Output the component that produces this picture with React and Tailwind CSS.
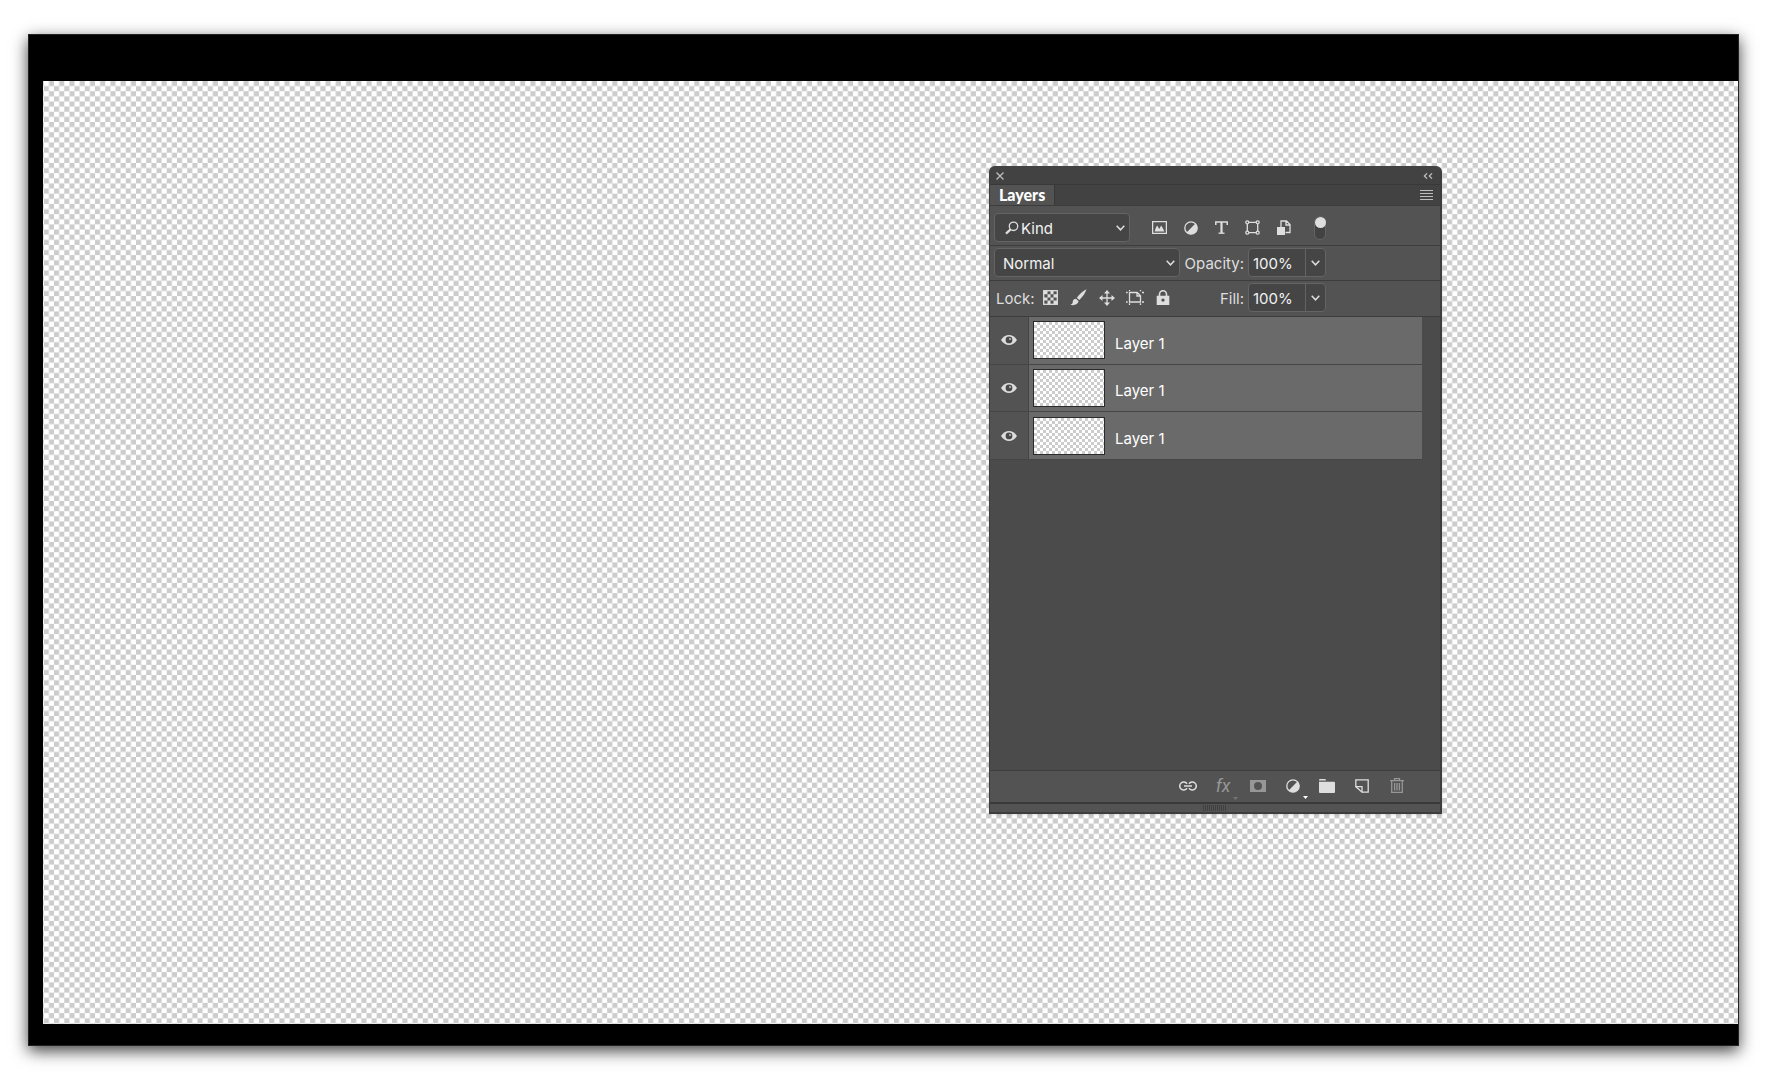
import React from 'react';

const stroke = { fill: 'none', stroke: 'currentColor', strokeWidth: 1.3 };

const CloseIcon = () => (
  <svg width="8" height="8" viewBox="0 0 8 8" {...stroke}>
    <path d="M.5.5l7 7M7.5.5l-7 7" />
  </svg>
);

const CollapseIcon = () => (
  <svg width="10" height="6" viewBox="0 0 10 6" {...stroke}>
    <path d="M4 .4L1.400 3 4 5.600M9 .4L6.400 3 9 5.600" />
  </svg>
);

const MenuIcon = () => (
  <svg width="13" height="10" viewBox="0 0 13 10" {...stroke} strokeWidth="1">
    <path d="M0 .5h13M0 3.500h13M0 6.500h13M0 9.500h13" />
  </svg>
);

const SearchIcon = () => (
  <svg width="14" height="14" viewBox="0 0 14 14" {...stroke}>
    <circle cx="8.500" cy="5.300" r="4.200" />
    <path d="M5.600 8.400L1 12.600" strokeWidth="2.200" />
  </svg>
);

const ChevronIcon = () => (
  <svg width="9" height="6" viewBox="0 0 9 6" {...stroke} strokeWidth="1.500">
    <path d="M.7.8l3.800 4L8.300.8" />
  </svg>
);

const ImageIcon = () => (
  <svg width="15" height="13" viewBox="0 0 15 13">
    <rect x=".6" y=".6" width="13.800" height="11.800" {...stroke} />
    <path d="M2.600 10.500L3.800 6.800 5.200 4.600l2 3.300 2-3.300 1.700 2.600 1.500 3.300z" fill="currentColor" />
  </svg>
);

const HalfCircleIcon = () => (
  <svg width="14" height="14" viewBox="0 0 14 14">
    <circle cx="7" cy="7" r="6.200" {...stroke} />
    <path d="M11.400 2.600A6.200 6.200 0 1 1 2.600 11.400z" fill="currentColor" />
  </svg>
);

const TypeIcon = () => (
  <svg width="13" height="13" viewBox="0 0 13 13" fill="none" stroke="currentColor">
    <path d="M.8 4V1h11.400v3" strokeWidth="1.500" />
    <path d="M6.500 1v11" strokeWidth="2.200" />
    <path d="M3.500 12.200h6" strokeWidth="1.300" />
  </svg>
);

const ShapeIcon = () => (
  <svg width="15" height="15" viewBox="0 0 15 15" {...stroke}>
    <path d="M4 2.300h7M4 12.700h7M2.300 4v7M12.700 4v7" />
    <circle cx="2.300" cy="2.300" r="1.500" />
    <circle cx="12.700" cy="2.300" r="1.500" />
    <circle cx="2.300" cy="12.700" r="1.500" />
    <circle cx="12.700" cy="12.700" r="1.500" />
  </svg>
);

const SmartObjectIcon = () => (
  <svg width="14" height="15" viewBox="0 0 14 15">
    <path d="M4 7V1h5.500L13 4.500V12.500H8.500M9 1v4h4" {...stroke} />
    <rect x="0" y="7" width="8" height="8" fill="currentColor" />
  </svg>
);

const TransparencyIcon = () => (
  <svg width="15" height="15" viewBox="0 0 15 15">
    <rect x=".7" y=".7" width="13.600" height="13.600" {...stroke} />
    <path d="M1 1h3.500v3.300H1zM7.500 1h3v3.300h-3zM4.500 4.300h3v3.200h-3zM10.500 4.300H14v3.200h-3.500zM1 7.500h3.500v3H1zM7.500 7.500h3v3h-3zM4.500 10.500h3V14h-3zM10.500 10.500H14V14h-3.500z" fill="currentColor" />
  </svg>
);

const BrushIcon = () => (
  <svg width="17" height="17" viewBox="0 0 17 17" fill="currentColor">
    <path d="M16.500.3C13 2 9.300 5.200 6.800 8.800l2.500 2.300C12.500 8 15.400 4 16.500.3z" />
    <path d="M5.900 9.700C3.900 9.800 2.800 11 2.800 12.800c0 1.500-.9 2.500-2.500 3 3.500 1.200 7.900-.2 8.200-3.700z" />
  </svg>
);

const MoveIcon = () => (
  <svg width="16" height="16" viewBox="0 0 16 16">
    <path d="M8 2v12M2 8h12" {...stroke} />
    <path d="M8 0l3 3.500H5zM8 16l3-3.500H5zM0 8l3.500-3v6zM16 8l-3.500-3v6z" fill="currentColor" />
  </svg>
);

const ArtboardIcon = () => (
  <svg width="18" height="15" viewBox="0 0 18 15" {...stroke}>
    <path d="M3.500 2.500h7.700l3.300 3.300v6.200h-11zM11 2.500v3.500h3.500" />
    <path d="M3.500 0v1.200M0 2.500h1.700M14.500 0v1.200M16 2.500h2M3.500 13.300V15M0 12h1.700M14.500 13.300V15M16 12h2" />
  </svg>
);

const LockIcon = () => (
  <svg width="14" height="15" viewBox="0 0 14 15">
    <path d="M3.500 6V4.200a3.500 3.500 0 0 1 7 0V6" {...stroke} strokeWidth="1.600" />
    <path d="M.7 5.700h12.600V15H.7zM7 8.400a1.700 1.700 0 1 0 0 3.400 1.700 1.700 0 0 0 0-3.400z" fill="currentColor" fillRule="evenodd" />
  </svg>
);

const EyeIcon = () => (
  <svg width="16" height="10" viewBox="0 0 16 10">
    <path d="M0 5C2.200 1.800 5 0 8 0s5.800 1.800 8 5c-2.200 3.200-5 5-8 5S2.200 8.200 0 5z" fill="#dedede" />
    <circle cx="8" cy="4.900" r="3.400" fill="#4a4a4a" />
    <circle cx="9" cy="3.900" r="1" fill="#c4c4c4" />
  </svg>
);

const LinkIcon = () => (
  <svg width="18" height="10" viewBox="0 0 18 10" {...stroke} strokeWidth="1.500">
    <path d="M8 2.700A4 4 0 1 0 8 7.300M10 2.700a4 4 0 1 1 0 4.600M5 5h8" />
  </svg>
);

const MaskIcon = () => (
  <svg width="16" height="12" viewBox="0 0 16 12">
    <path d="M0 0h16v12H0zM8 2a4 4 0 1 0 0 8 4 4 0 0 0 0-8z" fill="currentColor" fillRule="evenodd" />
  </svg>
);

const FolderIcon = () => (
  <svg width="16" height="14" viewBox="0 0 16 14" fill="currentColor">
    <path d="M.7 0h5.500l1.200 1.600H0V.8zM0 2.700h15a1 1 0 0 1 1 1V13a1 1 0 0 1-1 1H1a1 1 0 0 1-1-1z" />
  </svg>
);

const NewLayerIcon = () => (
  <svg width="14" height="14" viewBox="0 0 14 14" {...stroke}>
    <path d="M.8.8h12.400v12.400H7L.8 7.600z" />
    <path d="M.8 7.600H7v5.600" />
  </svg>
);

const TrashIcon = () => (
  <svg width="14" height="15" viewBox="0 0 14 15" {...stroke}>
    <path d="M0 2.600h14M4.500 2.300V.7h5v1.600M1.700 3v11.400h10.600V3M4.600 5v7.500M7 5v7.500M9.400 5v7.500" />
  </svg>
);

// transparency grid behind the document
const Checkerboard = () => (
  <svg className="absolute inset-0 size-full" aria-hidden="true">
    <defs>
      <pattern id="checker" x="0.800" y="0" width="10.243" height="10.243" patternUnits="userSpaceOnUse">
        <rect width="10.243" height="10.243" fill="#ffffff" />
        <path d="M5.122 0h5.121v5.122H5.122zM0 5.122h5.122v5.121H0z" fill="#cccccc" />
      </pattern>
    </defs>
    <rect width="100%" height="100%" fill="url(#checker)" />
  </svg>
);

const filters = [
  { label: 'Filter for pixel layers', icon: ImageIcon },
  { label: 'Filter for adjustment layers', icon: HalfCircleIcon },
  { label: 'Filter for type layers', icon: TypeIcon },
  { label: 'Filter for shape layers', icon: ShapeIcon },
  { label: 'Filter for smart objects', icon: SmartObjectIcon },
];

const locks = [
  { label: 'Lock transparent pixels', icon: TransparencyIcon },
  { label: 'Lock image pixels', icon: BrushIcon },
  { label: 'Lock position', icon: MoveIcon },
  { label: 'Prevent auto-nesting', icon: ArtboardIcon },
  { label: 'Lock all', icon: LockIcon },
];

const layers = [
  { id: 1, name: 'Layer 1' },
  { id: 2, name: 'Layer 1' },
  { id: 3, name: 'Layer 1' },
];

const actions = [
  { label: 'Link layers', icon: LinkIcon },
  { label: 'Add a layer style', text: 'fx', disabled: true, menu: true },
  { label: 'Add layer mask', icon: MaskIcon, disabled: true },
  { label: 'New adjustment layer', icon: HalfCircleIcon, menu: true },
  { label: 'New group', icon: FolderIcon },
  { label: 'New layer', icon: NewLayerIcon },
  { label: 'Delete layer', icon: TrashIcon, disabled: true },
];

const IconButton = ({ label, className = '', children, ...props }) => (
  <button type="button" aria-label={label} className={`flex items-center justify-center ${className}`} {...props}>
    {children}
  </button>
);

const SelectBox = ({ label, value, className, selectClass, icon }) => (
  <div className={`relative flex h-[29px] items-center rounded-sm border border-[#646464] bg-[#454545] ${className}`}>
    {icon}
    <select
      aria-label={label}
      defaultValue={value}
      className={`h-full w-full appearance-none bg-transparent pt-[3px] text-[#f2f2f2] outline-none ${selectClass}`}
    >
      <option>{value}</option>
    </select>
    <span className="pointer-events-none absolute right-1">
      <ChevronIcon />
    </span>
  </div>
);

const PercentField = ({ id, label }) => (
  <div className="flex w-[146px] items-center justify-end gap-1">
    <label htmlFor={id} className="pt-[3px]">{label}</label>
    <div className="flex h-[29px] rounded-sm border border-[#646464] bg-[#454545]">
      <input id={id} defaultValue="100%" className="w-14 bg-transparent pt-[3px] pl-1 text-[#f2f2f2] outline-none" />
      <IconButton label={`${label} slider`} className="w-5 border-l border-[#646464]">
        <ChevronIcon />
      </IconButton>
    </div>
  </div>
);

const LayersPanel = () => (
  <section className="flex w-[453px] flex-col rounded-t-md border-r-2 border-b-2 border-l border-[#3d3d3d] bg-[#535353] font-['Inter','Liberation_Sans',sans-serif] text-[15px] text-[#dedede] shadow-sm">
    <header className="flex h-[18px] items-center justify-between rounded-t-md bg-[#424242] pt-0.5 pr-1 pl-0.5 text-[#bdbdbd]">
      <IconButton label="Close panel" className="size-4">
        <CloseIcon />
      </IconButton>
      <IconButton label="Collapse panel" className="size-4">
        <CollapseIcon />
      </IconButton>
    </header>

    <div className="flex h-[21px] items-stretch justify-between border-t border-[#393939] bg-[#424242] pr-[7px]">
      <h2 className="flex items-center border-r border-[#393939] bg-[#535353] px-[9px] font-['Lato','Open_Sans',sans-serif] text-base font-black text-white">
        Layers
      </h2>
      <IconButton label="Panel menu" className="text-[#bdbdbd]">
        <MenuIcon />
      </IconButton>
    </div>

    <div className="flex h-[41px] items-end border-t border-b border-[#3d3d3d] pb-[3px] pl-1">
      <SelectBox
        label="Filter type"
        value="Kind"
        className="w-[136px]"
        selectClass="pl-0.5"
        icon={<span className="pl-2.5"><SearchIcon /></span>}
      />
      <div className="flex h-[29px] items-center pl-3.5">
        {filters.map((item) => (
          <IconButton key={item.label} label={item.label} className="h-6 w-[31px]">
            <item.icon />
          </IconButton>
        ))}
        <button
          type="button"
          role="switch"
          aria-checked="true"
          aria-label="Layer filtering"
          className="ml-[15px] flex h-6 w-3 items-start justify-center rounded-full border border-[#646464] bg-[#424242]"
        >
          <span className="size-[11px] shrink-0 rounded-full bg-[#dedede]" />
        </button>
      </div>
    </div>

    <div className="flex h-[35px] items-start border-b border-[#3d3d3d] pt-0.5 pl-1">
      <SelectBox label="Blend mode" value="Normal" className="w-[186px]" selectClass="pl-2" />
      <PercentField id="opacity" label="Opacity:" />
    </div>

    <div className="flex h-[35px] items-start pt-0.5 pl-1">
      <div className="flex h-[29px] w-[186px] items-center">
        <span className="pt-[3px] pr-0.5 pl-0.5">Lock:</span>
        {locks.map((item) => (
          <IconButton key={item.label} label={item.label} className="h-6 w-7">
            <item.icon />
          </IconButton>
        ))}
      </div>
      <PercentField id="fill" label="Fill:" />
    </div>

    <div className="min-h-[455px] border-t border-b border-[#3d3d3d] bg-[#4b4b4b] pr-[18px]">
      <ul className="grid h-[143px] grid-rows-3">
        {layers.map((layer) => (
          <li key={layer.id} className="flex items-stretch border-b border-[#454545] bg-[#6a6a6a]">
            <IconButton label="Toggle visibility" className="w-[39px] border-r border-[#454545] bg-[#535353]">
              <EyeIcon />
            </IconButton>
            <div className="flex items-center gap-2.5 pl-1">
              <div className="h-[38px] w-[72px] border border-[#2a2a2a] bg-[repeating-conic-gradient(#cccccc_0_25%,#ffffff_0_50%)] bg-size-[6px_6px]" />
              <span className="pt-[7px] text-white">{layer.name}</span>
            </div>
          </li>
        ))}
      </ul>
    </div>

    <footer className="flex h-[31px] items-center justify-end pr-[26px] pb-0.5">
      <div className="flex w-[243px] justify-between">
        {actions.map((action) => (
          <IconButton
            key={action.label}
            label={action.label}
            disabled={action.disabled}
            className="h-6 w-[35px] disabled:text-[#979797]"
          >
            <span className="relative flex w-3.5 items-center justify-center *:shrink-0">
              {action.icon ? (
                <action.icon />
              ) : (
                <em className="font-['Roboto',sans-serif] text-lg leading-4 font-normal">{action.text}</em>
              )}
              {action.menu && (
                <svg
                  className={`absolute -right-2 -bottom-1.5 ${action.disabled ? 'text-[#757575]' : 'text-white'}`}
                  width="5"
                  height="3"
                  viewBox="0 0 5 3"
                  fill="currentColor"
                >
                  <path d="M0 0h5L2.500 3z" />
                </svg>
              )}
            </span>
          </IconButton>
        ))}
      </div>
    </footer>

    <div className="flex h-[10px] items-center justify-center border-t-2 border-[#393939]">
      <span className="h-1.5 w-6 bg-[repeating-linear-gradient(90deg,#404040_0_1px,#535353_1px_2px)]" />
    </div>
  </section>
);

export default function App() {
  return (
    <main className="min-h-screen bg-white px-7 pt-[34px] pb-[33px]">
      <div className="border border-[#222222] bg-black pt-[46px] pb-[21px] pl-3.5 shadow-[0_5px_15px_rgba(0,0,0,0.75)]">
        <div className="relative flex min-h-[943px] items-start justify-end pt-[85px] pr-[296px]">
          <Checkerboard />
          <div className="relative">
            <LayersPanel />
          </div>
        </div>
      </div>
    </main>
  );
}
